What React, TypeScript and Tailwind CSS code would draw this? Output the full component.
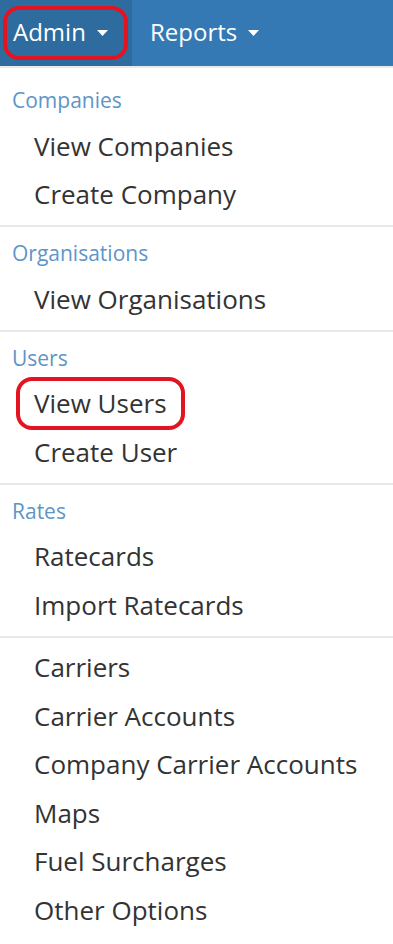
import React from 'react';

type Section = {
  title?: string;
  items: string[];
};

const sections: Section[] = [
  { title: 'Companies', items: ['View Companies', 'Create Company'] },
  { title: 'Organisations', items: ['View Organisations'] },
  { title: 'Users', items: ['View Users', 'Create User'] },
  { title: 'Rates', items: ['Ratecards', 'Import Ratecards'] },
  {
    items: [
      'Carriers',
      'Carrier Accounts',
      'Company Carrier Accounts',
      'Maps',
      'Fuel Surcharges',
      'Other Options',
    ],
  },
];

function Caret() {
  return (
    <svg width="11" height="6" viewBox="0 0 11 6" className="ml-[11px] mt-[2px]" aria-hidden="true">
      <path d="M0 0h11L5.5 6z" fill="white" />
    </svg>
  );
}

function Highlight() {
  return (
    <span className="pointer-events-none absolute inset-0 rounded-[16px] border-[4px] border-[#e3141f]" />
  );
}

export default function App() {
  return (
    <div className="min-h-[944px] w-[393px] bg-white font-['Open_Sans',sans-serif]">
      <nav className="flex h-[66px] items-stretch bg-[#3479b4] text-[24px] text-white">
        <div className="relative flex w-[132px] items-center bg-[#2e6b9e] pb-[3px] pl-[13px]">
          <span className="absolute left-[3px] right-[4px] top-[6px] bottom-[6px]">
            <Highlight />
          </span>
          Admin
          <Caret />
        </div>
        <div className="flex items-center pb-[3px] pl-[18px]">
          Reports
          <Caret />
        </div>
      </nav>
      <div className="h-[2px] bg-[#e9e9e9]" />

      <ul className="pt-[12px]">
        {sections.map((section, i) => (
          <li key={i}>
            {i > 0 && <div className="my-[6px] h-[2px] bg-[#e8e8e8]" />}
            {section.title && (
              <div className="flex h-[42px] items-center pl-[12px] text-[21px] text-[#5e95c7]">
                {section.title}
              </div>
            )}
            {section.items.map((item) => (
              <div key={item} className="flex h-[48.5px] items-center pl-[34px] text-[26px] text-[#333333]">
                {item === 'View Users' ? (
                  <span className="relative -mx-[18px] px-[18px] py-[7px]">
                    <Highlight />
                    {item}
                  </span>
                ) : (
                  item
                )}
              </div>
            ))}
          </li>
        ))}
      </ul>
    </div>
  );
}
